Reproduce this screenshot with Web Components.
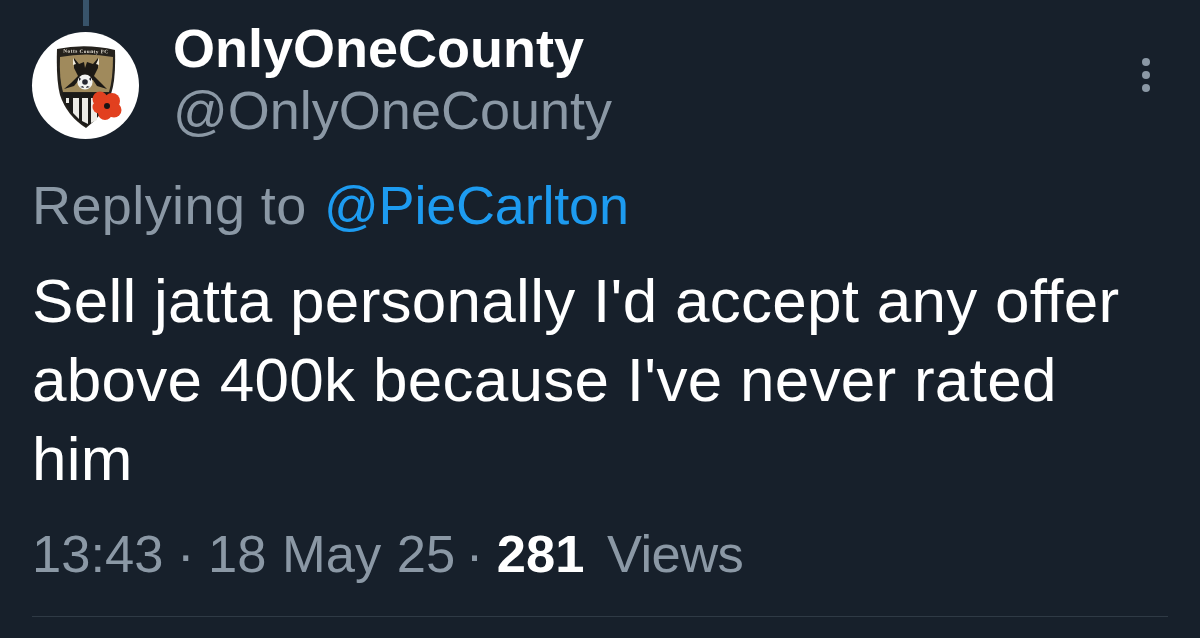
<!DOCTYPE html>
<html>
<head>
<meta charset="utf-8">
<style>
  html, body { margin: 0; height: 100%; background: #17202b; overflow: hidden; }
</style>
</head>
<body>
<tweet-card>
  <club-avatar slot="avatar"></club-avatar>
  <span slot="name">OnlyOneCounty</span>
  <span slot="handle">@OnlyOneCounty</span>
  <span slot="reply">@PieCarlton</span>
  Sell jatta personally I'd accept any offer above 400k because I've never rated him
  <tweet-meta slot="meta" time="13:43" date="18 May 25" views="281"></tweet-meta>
</tweet-card>

<script>
class ClubAvatar extends HTMLElement {
  constructor () {
    super()
    this.attachShadow({ mode: 'open' })
  }

  connectedCallback () {
    this.shadowRoot.innerHTML = `
      <style>
        :host { display: block; flex: none; width: 107px; height: 107px; border-radius: 50%; background: #fff; overflow: hidden; }
        svg { display: block; width: 100%; height: 100%; filter: blur(.4px); }
        text { font-family: "Liberation Serif", serif; font-weight: 700; fill: #e9e4d8; }
      </style>
      <svg viewBox="0 0 107 107">
        <path d="M25 17 Q54 11 83 18 Q84 48 79 62 Q71 84 54 96 Q35 84 28 63 Q24 48 25 17Z" fill="#24211c"/>
        <text x="54" y="21" font-size="5.2" text-anchor="middle" letter-spacing=".5" transform="rotate(1 54 21)">Notts County FC</text>
        <path d="M28 25 Q54 20 81 25 Q81 47 77 60 L31 60 Q27 47 28 25Z" fill="#a08a5c"/>
        <path d="M42 26 L47 32 L52 30 L53 36 L55 30 L61 32 L66 26 L66 36 L62 44 L70 52 L75 57 L65 54 L61 48 L47 48 L42 54 L32 57 L39 51 L46 44 L42 36Z" fill="#1c1915"/>
        <path d="M41 26l3 6-3 1zM67 26l-3 6 3 1z" fill="#eee8d8"/>
        <circle cx="53" cy="50" r="7.6" fill="#f3f3f1"/>
        <circle cx="53" cy="50" r="2.8" fill="#262630"/>
        <path d="M47 45l2 2-2 2zM59 45l-2 2 2 2zM48 55l3-1 1 2zM58 55l-3-1-1 2z" fill="#262630"/>
        <text x="53" y="65" font-size="4.6" text-anchor="middle">1862</text>
        <path d="M30 61 H78 Q71 84 54 94 Q37 84 30 61Z" fill="#1b1a18"/>
        <path d="M34 66h3v5h-3zM41 66h6v21l-6-6zM50 66h6v26l-6-3zM59 66h6v22l-6 3z" fill="#ecebe6"/>
        <g fill="#e2401f">
          <circle cx="68" cy="67" r="7.5"/>
          <circle cx="80" cy="69" r="8"/>
          <circle cx="82" cy="78" r="7.5"/>
          <circle cx="73" cy="81" r="7"/>
          <circle cx="67" cy="75" r="6.5"/>
        </g>
        <circle cx="75" cy="74" r="3" fill="#1a1414"/>
      </svg>`
  }
}

class TweetMeta extends HTMLElement {
  constructor () {
    super()
    this.attachShadow({ mode: 'open' })
  }

  connectedCallback () {
    const time = this.getAttribute('time')
    const date = this.getAttribute('date')
    const views = this.getAttribute('views')
    this.shadowRoot.innerHTML = `
      <style>
        :host { display: block; color: #8b98a5; font-size: 52.5px; line-height: 60px; white-space: nowrap; word-spacing: -1px; }
        .date { word-spacing: 1px; margin-right: -3px; }
        .views { letter-spacing: -.6px; }
        b { color: #fff; font-weight: 700; margin-right: 9px; }
      </style>
      ${time} · <span class="date">${date}</span> · <b>${views}</b> <span class="views">Views</span>`
  }
}

class TweetCard extends HTMLElement {
  constructor () {
    super()
    this.attachShadow({ mode: 'open' })
  }

  connectedCallback () {
    this.shadowRoot.innerHTML = `
      <style>
        :host { display: block; box-sizing: border-box; height: 638px; padding: 0 32px; color: #fff; font-family: "Liberation Sans", Arial, sans-serif; }
        .thread { width: 6px; height: 26px; margin-left: 51px; background: #38536a; }
        .head { display: flex; align-items: flex-start; height: 107px; margin-top: 6px; }
        .who { flex: 1; margin-left: 34px; margin-top: -15px; }
        .name { font-size: 54px; line-height: 62px; font-weight: 700; }
        .handle { font-size: 54px; line-height: 62px; color: #8b98a5; }
        .dots { display: grid; gap: 5px; margin: 26px 18px 0 0; }
        .dots i { width: 8px; height: 8px; border-radius: 50%; background: #8b98a5; }
        .reply { font-size: 54px; line-height: 62px; color: #8b98a5; margin-top: 35px; letter-spacing: .4px; }
        .reply ::slotted(span) { color: #1d9bf0; letter-spacing: -.2px; margin-left: 2px; }
        .text { font-size: 62px; line-height: 79px; margin-top: 25px; width: 1136px; letter-spacing: .28px; }
        .meta { margin-top: 26px; }
        hr { border: 0; height: 1px; background: #2f3a45; margin: 32px 0 0; }
      </style>
      <div class="thread"></div>
      <div class="head">
        <slot name="avatar"></slot>
        <div class="who">
          <div class="name"><slot name="name"></slot></div>
          <div class="handle"><slot name="handle"></slot></div>
        </div>
        <div class="dots"><i></i><i></i><i></i></div>
      </div>
      <div class="reply">Replying to <slot name="reply"></slot></div>
      <div class="text"><slot></slot></div>
      <div class="meta"><slot name="meta"></slot></div>
      <hr>`
  }
}

customElements.define('club-avatar', ClubAvatar)
customElements.define('tweet-meta', TweetMeta)
customElements.define('tweet-card', TweetCard)
</script>
</body>
</html>
